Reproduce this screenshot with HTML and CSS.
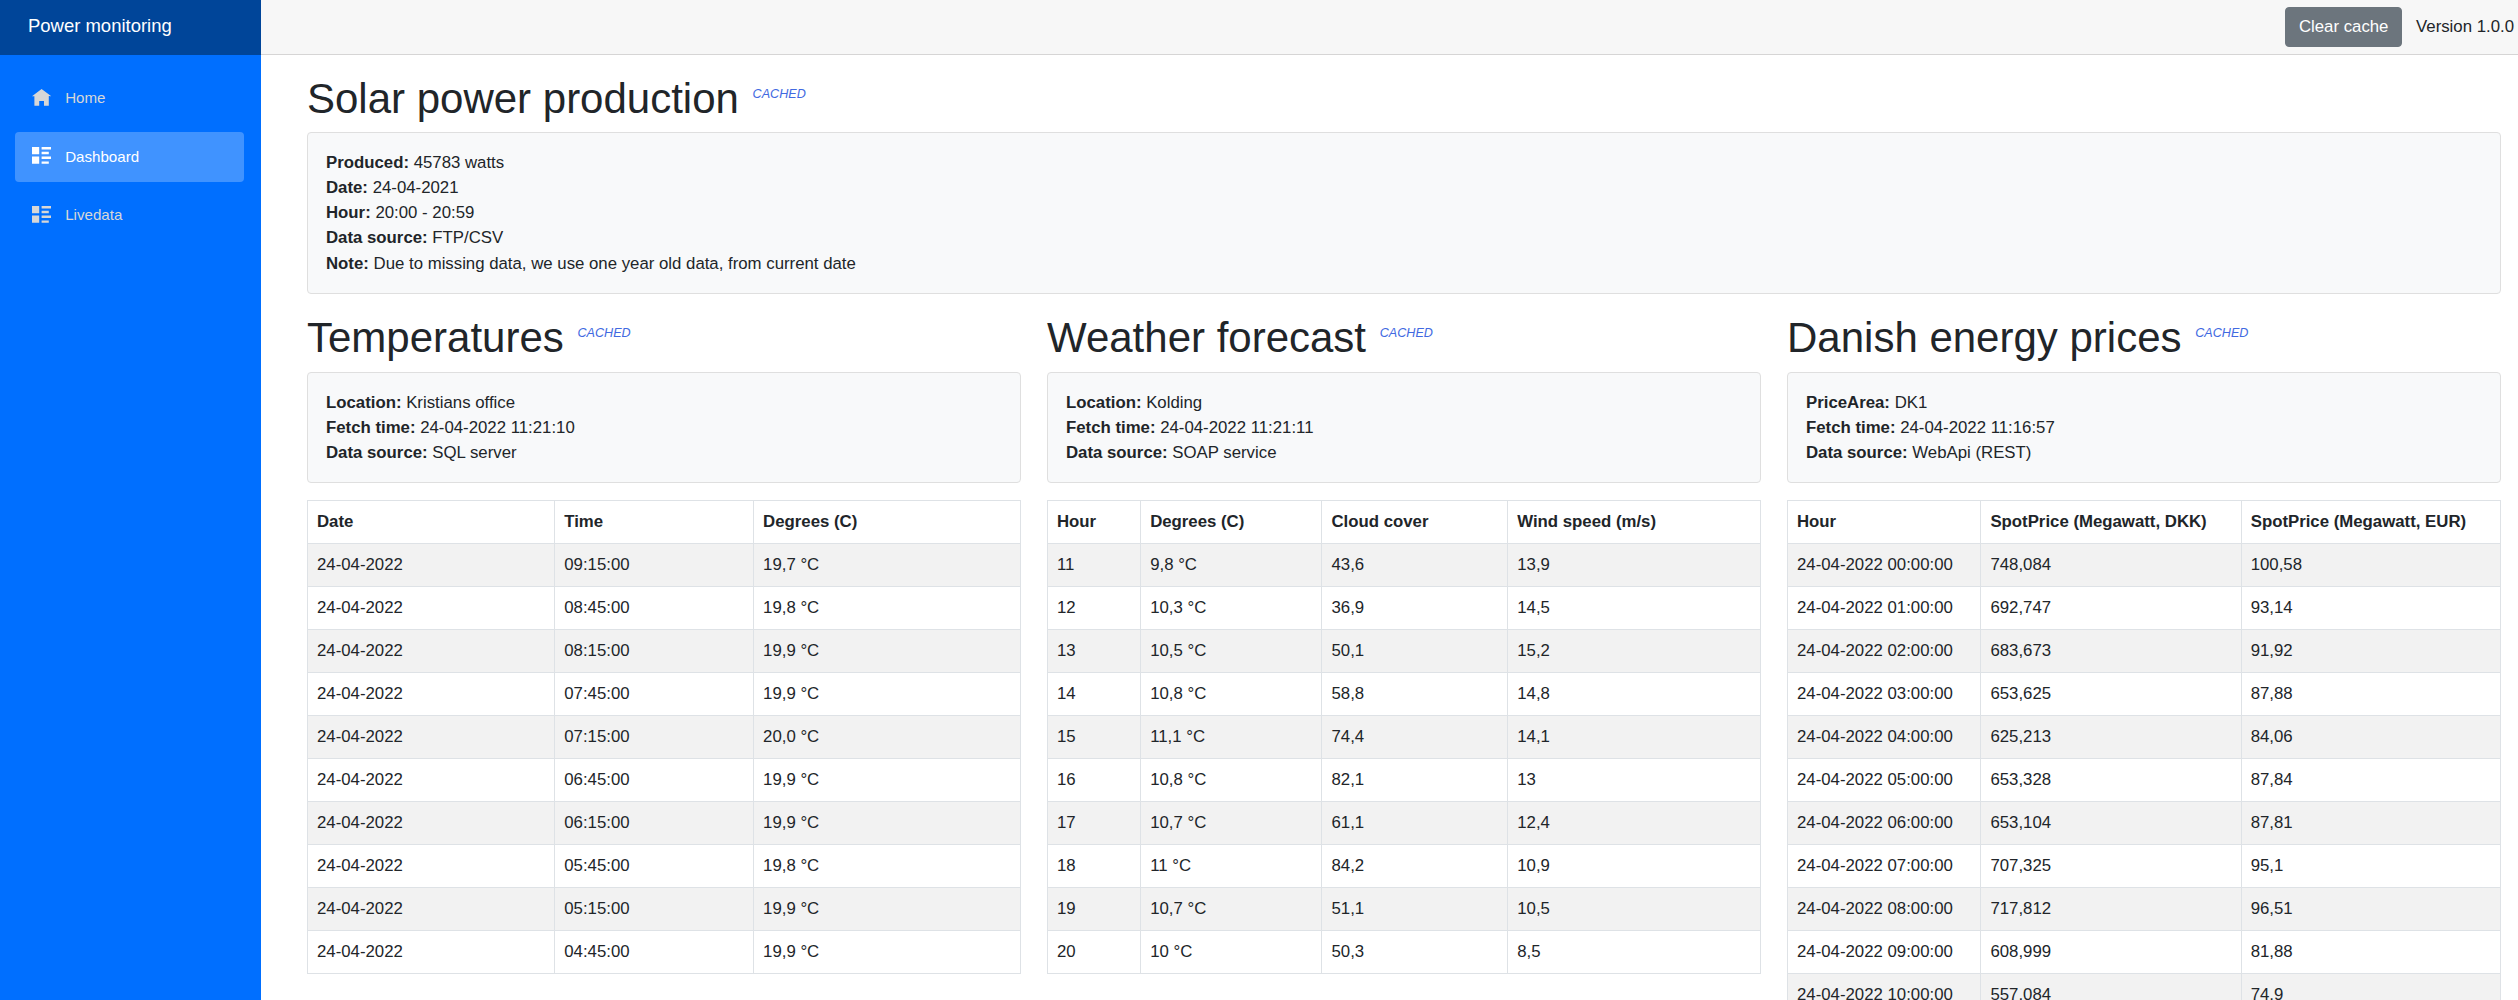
FILE: index.html
```html
<!DOCTYPE html>
<html lang="en">
<head>
  <meta charset="UTF-8">
  <title>Power monitoring</title>
  <link rel="stylesheet" href="styles.css">
</head>
<body>
  <div class="page">
    <aside class="sidebar">
      <div class="brand">Power monitoring</div>
      <nav class="nav">
        <a class="nav-link" href="#">
          <svg class="nav-icon" viewBox="0 0 8 8"><path d="M4 0l-4 3h1v4h2v-2h2v2h2v-4.030l1 .030-4-3z"/></svg>
          Home
        </a>
        <a class="nav-link active" href="#">
          <svg class="nav-icon" viewBox="0 0 8 8"><path d="M0 0v3h3v-3h-3zm4 0v1h4v-1h-4zm0 2v1h3v-1h-3zm-4 2v3h3v-3h-3zm4 0v1h4v-1h-4zm0 2v1h3v-1h-3z"/></svg>
          Dashboard
        </a>
        <a class="nav-link" href="#">
          <svg class="nav-icon" viewBox="0 0 8 8"><path d="M0 0v3h3v-3h-3zm4 0v1h4v-1h-4zm0 2v1h3v-1h-3zm-4 2v3h3v-3h-3zm4 0v1h4v-1h-4zm0 2v1h3v-1h-3z"/></svg>
          Livedata
        </a>
      </nav>
    </aside>

    <div class="main">
      <div class="top-row">
        <button class="btn">Clear cache</button>
        <span class="version">Version 1.0.0</span>
      </div>

      <div class="content">
        <h1>Solar power production <span class="cached">CACHED</span></h1>
        <div class="info">
          <b>Produced:</b> 45783 watts<br>
          <b>Date:</b> 24-04-2021<br>
          <b>Hour:</b> 20:00 - 20:59<br>
          <b>Data source:</b> FTP/CSV<br>
          <b>Note:</b> Due to missing data, we use one year old data, from current date
        </div>

        <div class="columns">
          <section>
            <h1>Temperatures <span class="cached">CACHED</span></h1>
            <div class="info">
              <b>Location:</b> Kristians office<br>
              <b>Fetch time:</b> 24-04-2022 11:21:10<br>
              <b>Data source:</b> SQL server
            </div>
            <table class="table temps">
              <thead>
                <tr><th>Date</th><th>Time</th><th>Degrees (C)</th></tr>
              </thead>
              <tbody>
                <tr><td>24-04-2022</td><td>09:15:00</td><td>19,7 °C</td></tr>
                <tr><td>24-04-2022</td><td>08:45:00</td><td>19,8 °C</td></tr>
                <tr><td>24-04-2022</td><td>08:15:00</td><td>19,9 °C</td></tr>
                <tr><td>24-04-2022</td><td>07:45:00</td><td>19,9 °C</td></tr>
                <tr><td>24-04-2022</td><td>07:15:00</td><td>20,0 °C</td></tr>
                <tr><td>24-04-2022</td><td>06:45:00</td><td>19,9 °C</td></tr>
                <tr><td>24-04-2022</td><td>06:15:00</td><td>19,9 °C</td></tr>
                <tr><td>24-04-2022</td><td>05:45:00</td><td>19,8 °C</td></tr>
                <tr><td>24-04-2022</td><td>05:15:00</td><td>19,9 °C</td></tr>
                <tr><td>24-04-2022</td><td>04:45:00</td><td>19,9 °C</td></tr>
              </tbody>
            </table>
          </section>

          <section>
            <h1>Weather forecast <span class="cached">CACHED</span></h1>
            <div class="info">
              <b>Location:</b> Kolding<br>
              <b>Fetch time:</b> 24-04-2022 11:21:11<br>
              <b>Data source:</b> SOAP service
            </div>
            <table class="table weather">
              <thead>
                <tr><th>Hour</th><th>Degrees (C)</th><th>Cloud cover</th><th>Wind speed (m/s)</th></tr>
              </thead>
              <tbody>
                <tr><td>11</td><td>9,8 °C</td><td>43,6</td><td>13,9</td></tr>
                <tr><td>12</td><td>10,3 °C</td><td>36,9</td><td>14,5</td></tr>
                <tr><td>13</td><td>10,5 °C</td><td>50,1</td><td>15,2</td></tr>
                <tr><td>14</td><td>10,8 °C</td><td>58,8</td><td>14,8</td></tr>
                <tr><td>15</td><td>11,1 °C</td><td>74,4</td><td>14,1</td></tr>
                <tr><td>16</td><td>10,8 °C</td><td>82,1</td><td>13</td></tr>
                <tr><td>17</td><td>10,7 °C</td><td>61,1</td><td>12,4</td></tr>
                <tr><td>18</td><td>11 °C</td><td>84,2</td><td>10,9</td></tr>
                <tr><td>19</td><td>10,7 °C</td><td>51,1</td><td>10,5</td></tr>
                <tr><td>20</td><td>10 °C</td><td>50,3</td><td>8,5</td></tr>
              </tbody>
            </table>
          </section>

          <section>
            <h1>Danish energy prices <span class="cached">CACHED</span></h1>
            <div class="info">
              <b>PriceArea:</b> DK1<br>
              <b>Fetch time:</b> 24-04-2022 11:16:57<br>
              <b>Data source:</b> WebApi (REST)
            </div>
            <table class="table prices">
              <thead>
                <tr><th>Hour</th><th>SpotPrice (Megawatt, DKK)</th><th>SpotPrice (Megawatt, EUR)</th></tr>
              </thead>
              <tbody>
                <tr><td>24-04-2022 00:00:00</td><td>748,084</td><td>100,58</td></tr>
                <tr><td>24-04-2022 01:00:00</td><td>692,747</td><td>93,14</td></tr>
                <tr><td>24-04-2022 02:00:00</td><td>683,673</td><td>91,92</td></tr>
                <tr><td>24-04-2022 03:00:00</td><td>653,625</td><td>87,88</td></tr>
                <tr><td>24-04-2022 04:00:00</td><td>625,213</td><td>84,06</td></tr>
                <tr><td>24-04-2022 05:00:00</td><td>653,328</td><td>87,84</td></tr>
                <tr><td>24-04-2022 06:00:00</td><td>653,104</td><td>87,81</td></tr>
                <tr><td>24-04-2022 07:00:00</td><td>707,325</td><td>95,1</td></tr>
                <tr><td>24-04-2022 08:00:00</td><td>717,812</td><td>96,51</td></tr>
                <tr><td>24-04-2022 09:00:00</td><td>608,999</td><td>81,88</td></tr>
                <tr><td>24-04-2022 10:00:00</td><td>557,084</td><td>74,9</td></tr>
              </tbody>
            </table>
          </section>
        </div>
      </div>
    </div>
  </div>
</body>
</html>
```

FILE: styles.css
```css
html {
  font-size: 16.8px;
}

body {
  margin: 0;
  font-family: "Liberation Sans", Arial, sans-serif;
  font-size: 1rem;
  line-height: 1.5;
  color: #212529;
  background-color: #fff;
}

.page {
  display: flex;
  height: 100vh;
  overflow: hidden;
}

.sidebar {
  flex: 0 0 261px;
  background-color: #006fff;
}

.brand {
  height: 55px;
  padding-left: 28px;
  line-height: 51px;
  font-size: 1.1rem;
  color: #fff;
  background-color: #004599;
}

.nav {
  display: flex;
  flex-direction: column;
  gap: 8.4px;
  padding: 18px 17px 0 15px;
}

.nav-link {
  display: flex;
  align-items: center;
  height: 3rem;
  padding-left: 17px;
  border-radius: 4px;
  font-size: 0.9rem;
  color: #d7d7d7;
  text-decoration: none;
}

.nav-link.active {
  background-color: rgba(255, 255, 255, 0.25);
  color: #fff;
}

.nav-icon {
  flex: none;
  width: 19.2px;
  height: 19.2px;
  margin-right: 14px;
  fill: currentColor;
}

.main {
  flex: 1;
  min-width: 0;
}

.top-row {
  display: flex;
  justify-content: flex-end;
  align-items: center;
  height: 54px;
  padding-right: 4px;
  background-color: #f7f7f7;
  border-bottom: 1px solid #d6d5d5;
}

.btn {
  height: 40px;
  padding: 0 12.6px;
  border: 1px solid #6c757d;
  border-radius: 4px;
  font-family: inherit;
  font-size: 1rem;
  color: #fff;
  background-color: #6c757d;
}

.version {
  margin-left: 14px;
}

.content {
  padding: 19px 17px 0 46px;
}

h1 {
  margin: 0 0 8.4px;
  font-size: 2.5rem;
  font-weight: 400;
  line-height: 1.2;
}

.content > h1 {
  margin-bottom: 7.4px;
}

.cached {
  margin-left: 2px;
  font-size: 0.75rem;
  font-style: italic;
  color: #4169e1;
  vertical-align: 15px;
}

.info {
  margin-bottom: 1rem;
  padding: 17px 18px;
  background-color: #f8f9fa;
  border: 1px solid #dfdfdf;
  border-radius: 4px;
}

.columns {
  display: grid;
  grid-template-columns: repeat(3, 1fr);
  gap: 26px;
  margin-top: 19px;
}

.table {
  width: 100%;
  border-collapse: collapse;
}

.table th,
.table td {
  padding: 8.4px 9px;
  text-align: left;
  border: 1px solid #dee2e6;
}

.table tbody tr:nth-child(odd) {
  background-color: rgba(0, 0, 0, 0.05);
}
```
